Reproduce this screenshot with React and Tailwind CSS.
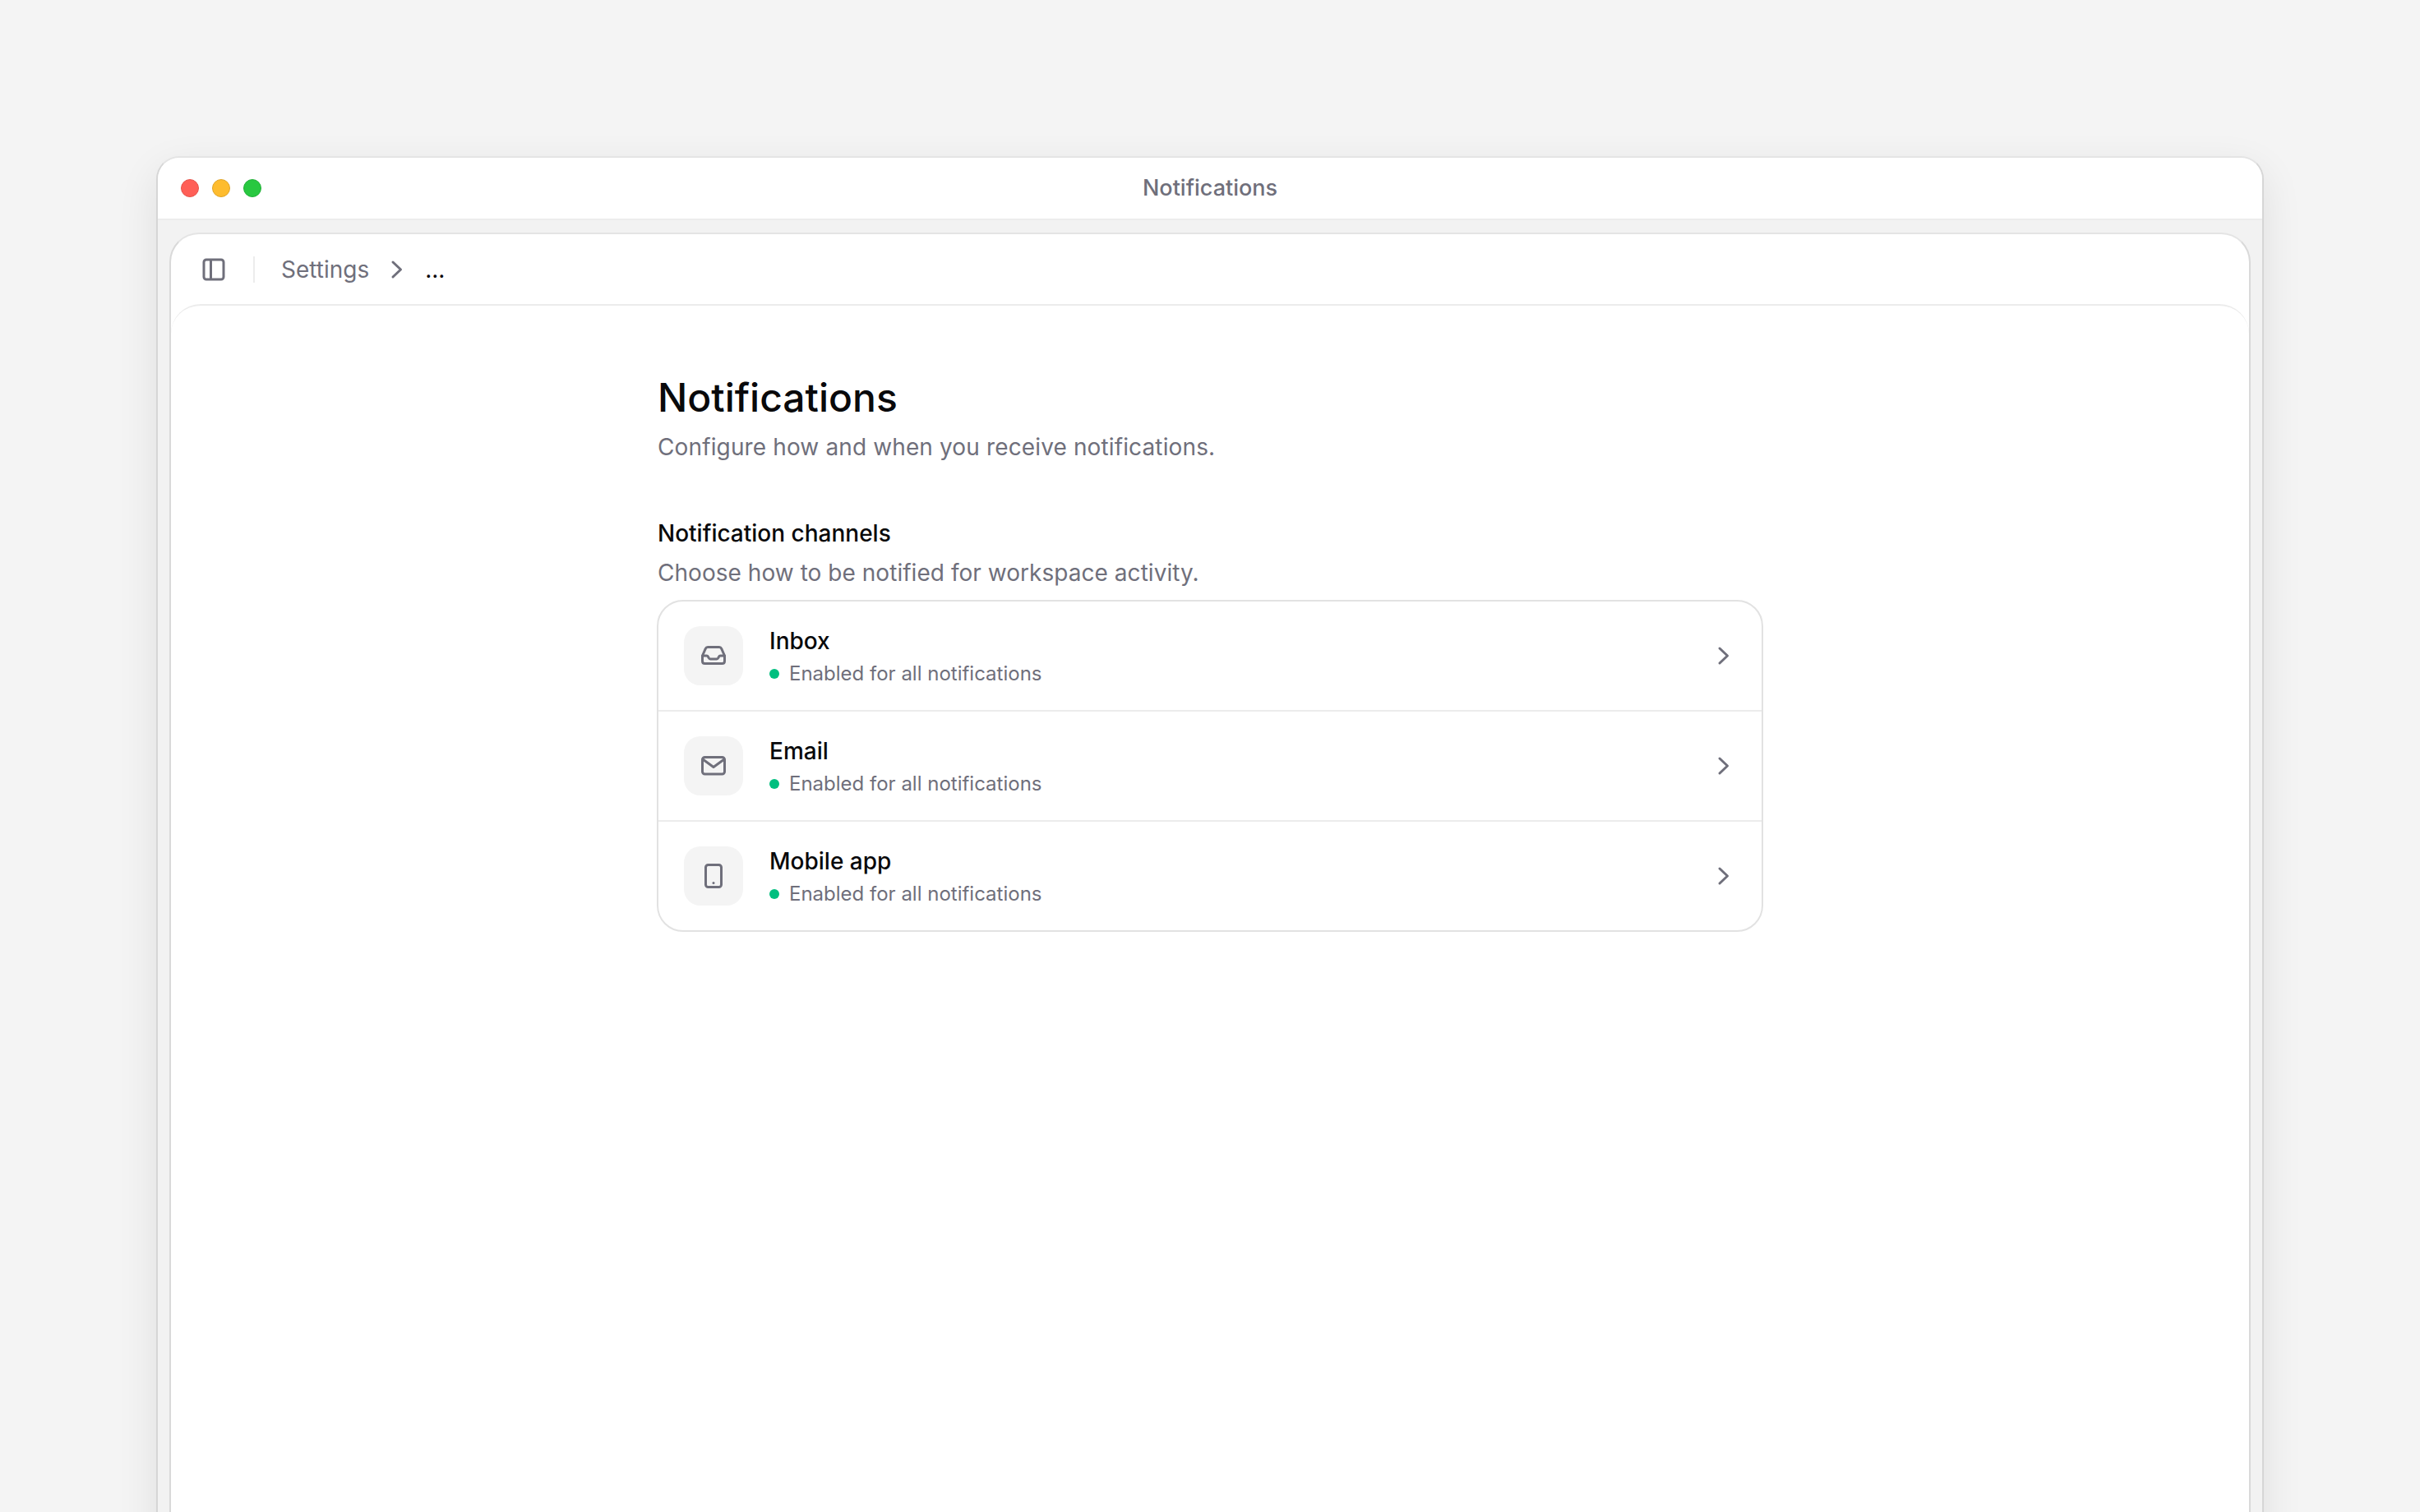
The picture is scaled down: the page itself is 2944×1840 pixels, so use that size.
import React from "react";

const PanelIcon = () => (
  <svg width="30" height="30" viewBox="0 0 30 30" fill="none" stroke="#6f6f7b" strokeWidth="3" strokeLinejoin="round">
    <rect x="3" y="3" width="24" height="24" rx="3" />
    <path d="M11.5 3v24" />
  </svg>
);

const Chevron = ({ className }) => (
  <svg className={className} width="16" height="24" viewBox="0 0 16 24" fill="none" stroke="#6f6f7b" strokeWidth="3" strokeLinecap="round" strokeLinejoin="round">
    <path d="M3 3l9.5 9-9.5 9" />
  </svg>
);

const InboxIcon = () => (
  <svg width="36" height="36" viewBox="0 0 36 36" fill="none" stroke="#6f6f7b" strokeWidth="3" strokeLinecap="round" strokeLinejoin="round">
    <path d="M11 7.500h14c1.200 0 2.200.7 2.700 1.800L31.500 18v6.500c0 1.800-1.200 3-3 3h-21c-1.800 0-3-1.200-3-3V18l3.800-8.700C8.800 8.200 9.800 7.500 11 7.500z" />
    <path d="M4.500 18h5.200c1 0 1.500.5 1.900 1.300l.6 1.400c.4.8.9 1.300 1.900 1.300h7.800c1 0 1.500-.5 1.900-1.300l.6-1.400c.4-.8.9-1.300 1.900-1.300h5.200" />
  </svg>
);

const MailIcon = () => (
  <svg width="36" height="36" viewBox="0 0 36 36" fill="none" stroke="#6f6f7b" strokeWidth="3" strokeLinecap="round" strokeLinejoin="round">
    <rect x="4.500" y="7.500" width="27" height="20.500" rx="3" />
    <path d="M5 10l13 9.500L31 10" />
  </svg>
);

const PhoneIcon = () => (
  <svg width="36" height="36" viewBox="0 0 36 36" fill="none" stroke="#6f6f7b" strokeWidth="3" strokeLinecap="round" strokeLinejoin="round">
    <rect x="8.500" y="4.500" width="19" height="27" rx="3" />
    <path d="M18 26.500h.01" />
  </svg>
);

const channels = [
  { name: "Inbox", icon: <InboxIcon /> },
  { name: "Email", icon: <MailIcon /> },
  { name: "Mobile app", icon: <PhoneIcon /> },
];

const ChannelRow = ({ name, icon, last }) => (
  <div className={`flex items-center h-[132px] pl-[31px] pr-[38px] ${last ? "" : "border-b-2 border-[#ececec] h-[134px]"}`}>
    <div className="flex items-center justify-center w-[72px] h-[72px] rounded-[20px] bg-[#f4f4f4]">{icon}</div>
    <div className="ml-8 flex-1 pt-[4px] pb-[2px]">
      <div className="text-[28px] leading-[36px] font-[450] text-[#09090b]">{name}</div>
      <div className="flex items-center mt-[6px]">
        <span className="w-3 h-3 rounded-full bg-[#00bf7f]" />
        <span className="ml-[12px] text-[24px] leading-[32px] text-[#6f6f7b]">Enabled for all notifications</span>
      </div>
    </div>
    <Chevron />
  </div>
);

export default function App() {
  return (
    <div className="h-[1840px] overflow-hidden bg-[#f4f4f4] pt-[190px] px-[190px] font-['Inter',sans-serif]">
      <div className="h-[1800px] rounded-[28px] border-2 border-[#d6d6d6] border-t-[#e4e4e4] bg-[#f2f2f2] shadow-[0_16px_50px_rgba(0,0,0,0.09)] overflow-hidden">
        <div className="relative flex items-center h-[76px] pl-[28px] bg-white border-b-2 border-[#ececec]">
          <div className="flex gap-4">
            <span className="w-[22px] h-[22px] rounded-full bg-[#ff5f57] border border-[#e5534b]" />
            <span className="w-[22px] h-[22px] rounded-full bg-[#febc2e] border border-[#e0a528]" />
            <span className="w-[22px] h-[22px] rounded-full bg-[#28c840] border border-[#22b038]" />
          </div>
          <div className="absolute inset-0 flex items-center justify-center text-[27px] font-[450] text-[#6f6f7b]">Notifications</div>
        </div>
        <div className="mx-[14px] mt-[15px] h-[1700px] rounded-t-[36px] border-2 border-[#d9d9d9] border-t-[#e4e4e4] bg-white overflow-hidden">
          <div className="flex items-center h-[85px] pl-[37px]">
            <PanelIcon />
            <div className="w-[2px] h-[32px] bg-[#ececec] ml-[33px]" />
            <span className="ml-[32px] text-[28px] text-[#6f6f7b]">Settings</span>
            <Chevron className="ml-[26px]" />
            <span className="ml-[26px] text-[28px] text-[#09090b]">...</span>
          </div>
          <div className="h-[1600px] rounded-t-[36px] border-t-2 border-[#ececec] pt-[80px]">
            <div className="w-[1346px] mx-auto">
              <h1 className="text-[48px] leading-[64px] font-[450] text-[#09090b] pl-[1px]">Notifications</h1>
              <p className="mt-[8px] text-[28px] tracking-[0.13px] leading-[40px] text-[#6f6f7b] pl-[1px]">Configure how and when you receive notifications.</p>
              <h2 className="mt-[65px] text-[28px] leading-[40px] font-[450] text-[#09090b] pl-[1px]">Notification channels</h2>
              <p className="mt-[8px] text-[28px] tracking-[0.04px] leading-[40px] text-[#6f6f7b] pl-[1px]">Choose how to be notified for workspace activity.</p>
              <div className="mt-[13px] rounded-[32px] border-2 border-[#e2e2e2] overflow-hidden">
                {channels.map((c, i) => (
                  <ChannelRow key={c.name} name={c.name} icon={c.icon} last={i === channels.length - 1} />
                ))}
              </div>
            </div>
          </div>
        </div>
      </div>
    </div>
  );
}
